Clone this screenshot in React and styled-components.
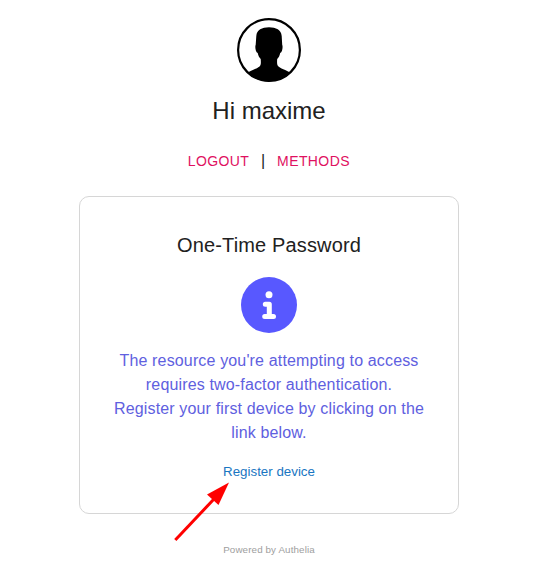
import React from "react";
import styled, { createGlobalStyle } from "styled-components";

const GlobalStyle = createGlobalStyle`
  body {
    margin: 0;
    background: #fff;
    color: #212121;
    font-family: "Liberation Sans", Arial, sans-serif;
  }
`;

const Page = styled.main`
  position: relative;
  box-sizing: border-box;
  width: 538px;
  height: 583px;
  padding-top: 18px;
  display: flex;
  flex-direction: column;
  align-items: center;
  overflow: hidden;
`;

const Avatar = styled.svg`
  display: block;
  width: 64px;
  height: 64px;
`;

const Greeting = styled.h1`
  margin: 13px 0 0;
  font-size: 24px;
  font-weight: 400;
  line-height: 32px;
`;

const Nav = styled.nav`
  display: flex;
  align-items: center;
  justify-content: center;
  height: 24px;
  margin-top: 22px;
`;

const NavButton = styled.button`
  border: 0;
  background: none;
  padding: 0;
  font: 14px/24px "Liberation Sans", Arial, sans-serif;
  letter-spacing: 0.4px;
  white-space: nowrap;
  color: #e0115f;
  width: ${({ $width }) => $width}px;
`;

const Divider = styled.span`
  width: 27px;
  font-size: 16px;
  line-height: 24px;
  height: 24px;
  text-align: center;
`;

const Card = styled.section`
  box-sizing: border-box;
  width: 380px;
  height: 318px;
  margin-top: 23px;
  padding: 32px;
  border: 1px solid #d6d6d6;
  border-radius: 10px;
  display: flex;
  flex-direction: column;
  align-items: center;
`;

const Title = styled.h2`
  margin: 0;
  font-size: 20px;
  font-weight: 400;
  line-height: 32px;
  letter-spacing: 0.15px;
`;

const InfoIcon = styled.svg`
  display: block;
  flex: none;
  width: 56px;
  height: 56px;
  margin-top: 16px;
`;

const Message = styled.p`
  margin: 16px 0 0;
  font-size: 16px;
  line-height: 24px;
  letter-spacing: 0.15px;
  text-align: center;
  color: #6060e0;
`;

const RegisterLink = styled.a`
  margin-top: 17px;
  font-size: 13.33px;
  line-height: 20px;
  color: #1976c2;
`;

const Footer = styled.footer`
  margin-top: 28px;
  font-size: 9.8px;
  line-height: 16px;
  letter-spacing: 0.12px;
  color: #9e9e9e;
`;

const Arrow = styled.svg`
  position: absolute;
  left: 170px;
  top: 478px;
  width: 64px;
  height: 66px;
  pointer-events: none;
`;

export default function App() {
  return (
    <>
      <GlobalStyle />
      <Page>
        <Avatar viewBox="0 0 64 64" aria-hidden="true">
          <defs>
            <clipPath id="portrait">
              <circle cx="32" cy="32" r="31.5" />
            </clipPath>
          </defs>
          <path
            clipPath="url(#portrait)"
            d="M8 57c5-5 11-5.500 14.500-8.500C24 47 24 45 23.700 41c-1.500-1.500-2.500-3.500-3-6-2.200-1-2.900-6.500-2-8.300L19.300 18C19.800 12 25 9.300 32 9.300S44.200 12 44.700 18l.5 8.700c.9 1.800.2 7.300-2 8.300-.5 2.500-1.500 4.500-3 6-.3 4-.2 6 1.300 7.500C45 51.500 51 52 56 57v9H8z"
          />
          <circle cx="32" cy="32" r="30.900" fill="none" stroke="#000" strokeWidth="2.200" />
        </Avatar>
        <Greeting>Hi maxime</Greeting>
        <Nav>
          <NavButton $width={62}>LOGOUT</NavButton>
          <Divider>|</Divider>
          <NavButton $width={74}>METHODS</NavButton>
        </Nav>
        <Card>
          <Title>One-Time Password</Title>
          <InfoIcon viewBox="0 0 56 56" aria-hidden="true">
            <circle cx="28" cy="28" r="28" fill="#5858ff" />
            <circle cx="28" cy="17.700" r="3.500" fill="#fff" />
            <path
              d="M24.300 27.300h4V39.500M23.700 39.500h8.800"
              fill="none"
              stroke="#fff"
              strokeWidth="5"
              strokeLinecap="round"
              strokeLinejoin="round"
            />
          </InfoIcon>
          <Message>
            The resource you're attempting to access
            <br />
            requires two-factor authentication.
            <br />
            Register your first device by clicking on the
            <br />
            link below.
          </Message>
          <RegisterLink>Register device</RegisterLink>
        </Card>
        <Footer>Powered by Authelia</Footer>
        <Arrow viewBox="0 0 64 66" aria-hidden="true">
          <path d="M5.300 62 44 21" fill="none" stroke="#f00" strokeWidth="3" />
          <path d="M59 4.500 37 16.500 48.500 27z" fill="#f00" />
        </Arrow>
      </Page>
    </>
  );
}
